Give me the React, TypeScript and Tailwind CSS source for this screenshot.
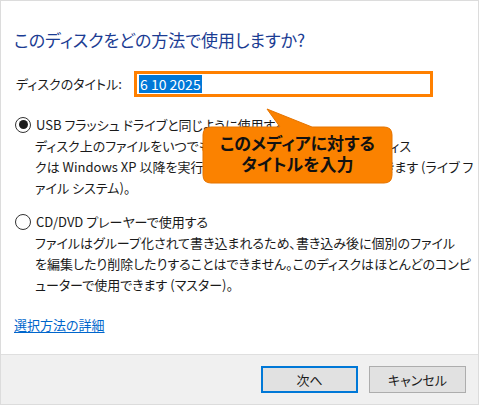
import React from "react";

function Radio({ checked }: { checked: boolean }) {
  return (
    <span className="flex h-[16px] w-[16px] shrink-0 items-center justify-center rounded-full border border-[#333333] bg-white">
      {checked && <span className="h-[9px] w-[9px] rounded-full bg-[#1a1a1a]" />}
    </span>
  );
}

export default function App() {
  return (
    <div
      className="relative flex h-[405px] w-[479px] flex-col overflow-hidden whitespace-nowrap border border-[#dcdcdc] bg-white text-[#1a1a1a] [font-feature-settings:'palt']"
      style={{ fontFamily: '"Noto Sans CJK JP", "Noto Sans", sans-serif' }}
    >
      <div className="flex-1 pl-[13px] pr-[14px] pt-[27px]">
        <h1 className="text-[17px] leading-[24px] text-[#1b3c93]">このディスクをどの方法で使用しますか?</h1>

        <div className="mt-[19px] flex items-center">
          <span className="w-[120px] pl-[2px] text-[13px] leading-[20px]">ディスクのタイトル:</span>
          <div className="flex h-[26px] w-[299px] items-center border-[3px] border-[#ff8000] pl-[2px]">
            <span className="bg-[#0078d7] px-[1px] text-[14px] leading-[18px] text-white">6 10 2025</span>
          </div>
        </div>

        <div className="mt-[17px] flex items-center gap-[5px] pl-[1px]">
          <Radio checked />
          <span className="text-[13px] leading-[21px]">USB フラッシュ ドライブと同じように使用する</span>
        </div>
        <p className="pl-[21px] text-[13px] leading-[21px]">
          ディスク上のファイルをいつでも保存、編集、削除できます。このディス
          <br />
          クは Windows XP 以降を実行しているコンピューターで使用できます (ライブ フ
          <br />
          ァイル システム)。
        </p>

        <div className="mt-[13px] flex items-center gap-[5px] pl-[1px]">
          <Radio checked={false} />
          <span className="text-[13px] leading-[21px]">CD/DVD プレーヤーで使用する</span>
        </div>
        <p className="pl-[21px] text-[13px] leading-[21px]">
          ファイルはグループ化されて書き込まれるため、書き込み後に個別のファイル
          <br />
          を編集したり削除したりすることはできません。このディスクはほとんどのコンピ
          <br />
          ューターで使用できます (マスター)。
        </p>

        <a className="mt-[20px] block w-fit text-[13px] leading-[20px] text-[#0066cc] underline underline-offset-2">
          選択方法の詳細
        </a>
      </div>

      <div className="flex h-[50px] shrink-0 items-center justify-end gap-[11px] border-t border-[#dfdfdf] bg-[#f0f0f0] pr-[12px]">
        <button className="flex h-[27px] w-[97px] items-center justify-center border-2 border-[#0078d7] bg-[#e1e1e1] text-[13px]">
          次へ
        </button>
        <button className="flex h-[27px] w-[97px] items-center justify-center border border-[#adadad] bg-[#e1e1e1] text-[13px]">
          キャンセル
        </button>
      </div>

      <div className="absolute left-[201px] top-[107px] h-[76px] w-[191px]">
        <svg className="absolute left-0 top-0" width="191" height="76" viewBox="0 0 191 76">
          <path
            d="M65 1 L110 19 L182 19 Q190 19 190 27 L190 67 Q190 75 182 75 L9 75 Q1 75 1 67 L1 27 Q1 19 9 19 L78 19 Z"
            fill="#fb8200"
            stroke="#e57400"
            strokeWidth="1"
          />
        </svg>
        <div className="absolute left-0 top-[24px] w-[191px] text-center text-[17px] font-bold leading-[21px] text-[#111]">
          このメディアに対する
          <br />
          タイトルを入力
        </div>
      </div>
    </div>
  );
}
